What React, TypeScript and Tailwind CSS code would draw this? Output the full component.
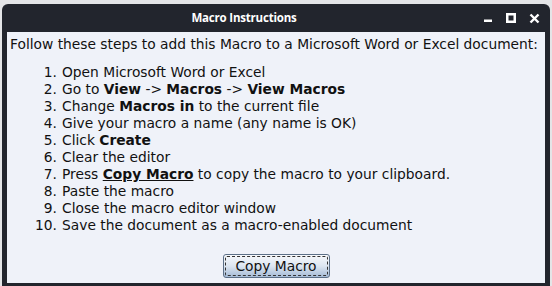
const steps: React.ReactNode[] = [
  <>Open Microsoft Word or Excel</>,
  <>
    Go to <b>View</b> -&gt; <b>Macros</b> -&gt; <b>View Macros</b>
  </>,
  <>
    Change <b>Macros in</b> to the current file
  </>,
  <>Give your macro a name (any name is OK)</>,
  <>
    Click <b>Create</b>
  </>,
  <>Clear the editor</>,
  <>
    Press <b className="underline">Copy Macro</b> to copy the macro to your clipboard.
  </>,
  <>Paste the macro</>,
  <>Close the macro editor window</>,
  <>Save the document as a macro-enabled document</>,
];

export default function App() {
  return (
    <div className="w-[552px] h-[286px] bg-[#e4e5e7] pt-[4px] px-[2px] overflow-hidden">
      <div className="h-full flex flex-col bg-[#22252d] rounded-t-[6px] px-[5px] pb-[3px]">
        {/* Title bar */}
        <div className="h-[28px] flex items-center shrink-0">
          <div className="flex-1 text-center text-white font-bold text-[11.5px] font-['Open_Sans',sans-serif] tracking-[-0.2px]">
            Macro Instructions
          </div>
          <div className="flex items-center gap-[13px] pr-[5px] pl-[2px]">
            <svg width="10" height="10" viewBox="0 0 10 10">
              <rect x="1" y="6.5" width="8" height="2.5" fill="#fff" />
            </svg>
            <svg width="10" height="10" viewBox="0 0 10 10">
              <rect x="1.25" y="1.25" width="7.5" height="7.5" fill="none" stroke="#fff" strokeWidth="2.5" />
            </svg>
            <svg width="11" height="11" viewBox="0 0 11 11">
              <path d="M1.5 1.5 L9.5 9.5 M9.5 1.5 L1.5 9.5" stroke="#fff" strokeWidth="2.4" />
            </svg>
          </div>
        </div>

        {/* Content */}
        <div className="flex-1 bg-[#eff2f9] text-[#111] font-['DejaVu_Sans',sans-serif] text-[13.8px] leading-[17px] flex flex-col">
          <p className="pt-[4px] pl-[3px] whitespace-nowrap">
            Follow these steps to add this Macro to a Microsoft Word or Excel document:
          </p>
          <ol className="mt-[11px]">
            {steps.map((s, i) => (
              <li key={i} className="flex whitespace-nowrap">
                <span className="w-[50px] text-right">{i + 1}.</span>
                <span className="pl-[5px]">{s}</span>
              </li>
            ))}
          </ol>
          <div className="flex justify-center mt-[20px]">
            <button className="w-[107px] h-[24px] rounded-[3px] border border-[#5c6f86] bg-gradient-to-b from-[#f7f9fc] via-[#dde6f1] to-[#a5bbd6] p-[1px]">
              <div className="h-full w-full border border-dashed border-[#333] rounded-[2px] flex items-center justify-center text-[13.8px] text-[#111]">
                Copy Macro
              </div>
            </button>
          </div>
        </div>
      </div>
    </div>
  );
}
